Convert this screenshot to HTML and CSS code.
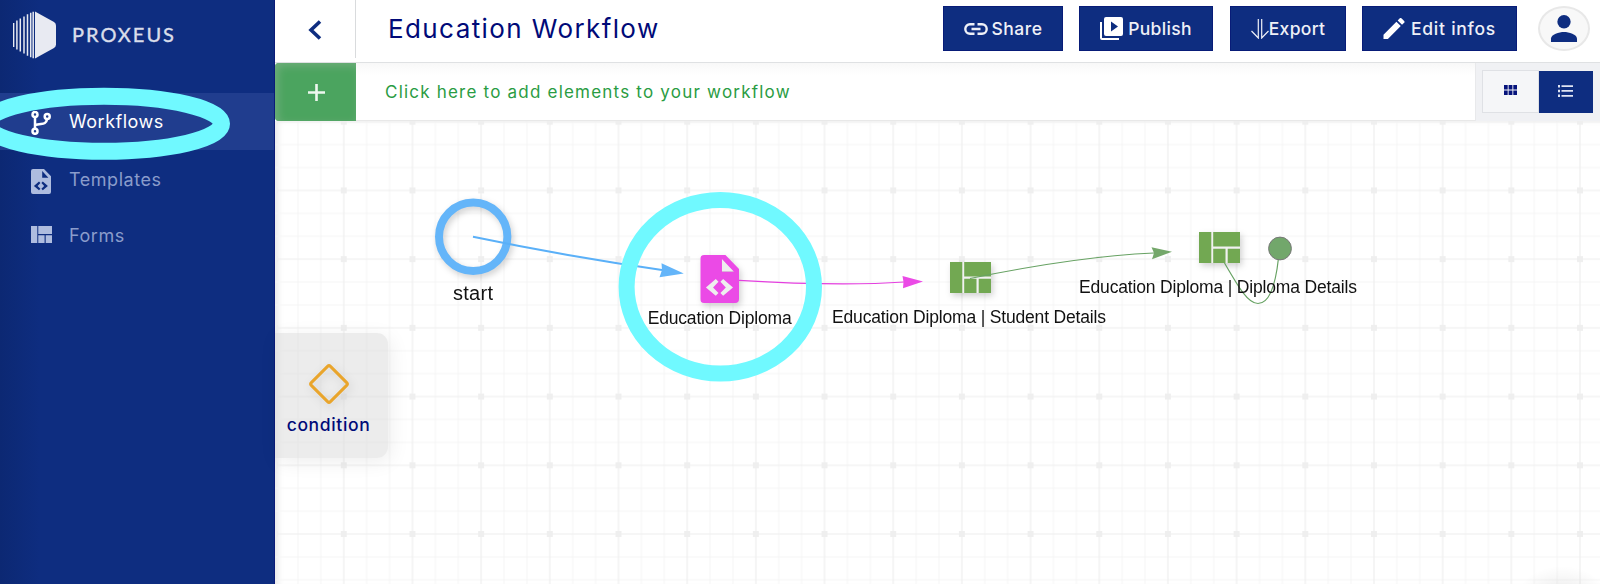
FILE: index.html
```html
<!DOCTYPE html>
<html lang="en">
<head>
<meta charset="utf-8">
<title>Education Workflow</title>
<link rel="stylesheet" href="styles.css">
</head>
<body>
<svg class="defs" aria-hidden="true">
  <symbol id="doc" viewBox="0 0 20 24" preserveAspectRatio="none"><path fill-rule="evenodd" d="M2 0h11l7 7v15a2 2 0 0 1-2 2H2a2 2 0 0 1-2-2V2a2 2 0 0 1 2-2zm9.200 2v6.400h6.200zM8 12l1.400 1.400-2.800 2.800 2.800 2.800L8 20.400l-5.100-4.200zm3.800 0 5.100 4.200-5.100 4.200-1.400-1.400 2.800-2.800-2.800-2.800z"/></symbol>
  <symbol id="form" viewBox="0 0 41 31" preserveAspectRatio="none"><path d="M0 0h12.300v31H0zM14.200 0H41v14.500H14.200zM14.200 16.700h12.300V31H14.200zM28.700 16.700H41V31H28.700z"/></symbol>
</svg>
<div class="app">
  <aside class="sidebar">
    <div class="brand">
      <svg class="brand-mark" viewBox="0 0 43 48">
        <path d="M22 .6 41 11q2 1.300 2 3.500v19q0 2.200-2 3.500L22 47.400z"/>
        <path d="M.6 12v24M3.900 9.500v29M7.300 7.500v33M11 5.500v37M14.500 3.300v41.400M17.700 1.700v44.600M20.200.7v46.600" fill="none" stroke="#e8eaf2" stroke-width="1.500"/>
      </svg>
      <span class="brand-name">PROXEUS</span>
    </div>
    <nav class="menu">
      <a class="item active">
        <svg class="icon-flow" viewBox="0 0 20 24"><g fill="none" stroke="currentColor" stroke-width="2.500"><circle cx="4" cy="3.500" r="2.500"/><circle cx="4" cy="20.300" r="2.500"/><circle cx="16.200" cy="5.500" r="2.500"/><path d="M4 6v12M4 14.200c6-2.500 11 .5 12-6"/></g></svg>
        <span>Workflows</span>
      </a>
      <a class="item templates"><svg class="icon-doc"><use href="#doc"/></svg><span>Templates</span></a>
      <a class="item forms"><svg class="icon-form"><use href="#form"/></svg><span>Forms</span></a>
    </nav>
    <svg class="mark" viewBox="0 0 274 80"><ellipse cx="104" cy="39.800" rx="117.500" ry="27.500"/></svg>
  </aside>
  <main class="main">
    <header class="header">
      <div class="back"><svg viewBox="0 0 14 20"><path d="M12 1.500 3 10l9 8.500"/></svg></div>
      <h1 class="title">Education Workflow</h1>
      <div class="actions">
        <button class="btn share"><svg class="icon-link" viewBox="0 0 24 12"><g fill="none" stroke="currentColor" stroke-width="2.400"><path d="M10.500 1.300H6a4.700 4.700 0 0 0 0 9.400h4.500M13.500 1.300H18a4.700 4.700 0 0 1 0 9.400h-4.500M7.500 6h9"/></g></svg><span>Share</span></button>
        <button class="btn publish"><svg class="icon-publish" viewBox="0 0 23 23"><path d="M0 5h2v16h17v2H2a2 2 0 0 1-2-2z"/><path fill-rule="evenodd" d="M6 0h15a2 2 0 0 1 2 2v15a2 2 0 0 1-2 2H6a2 2 0 0 1-2-2V2a2 2 0 0 1 2-2zm5 4.500v10l7-5z"/></svg><span>Publish</span></button>
        <button class="btn export"><svg class="icon-down" viewBox="0 0 18 20"><path d="M7.300 0v19L.5 12M10.700 0v19l6.800-7" fill="none" stroke="currentColor" stroke-width="1.200"/></svg><span>Export</span></button>
        <button class="btn edit"><svg class="icon-pen" viewBox="3 3 18 18"><path d="M3 17.250V21h3.750L17.810 9.940l-3.750-3.750zM20.710 7.040a1 1 0 0 0 0-1.410l-2.340-2.340a1 1 0 0 0-1.410 0l-1.830 1.830 3.750 3.750z"/></svg><span>Edit infos</span></button>
      </div>
      <div class="avatar"><svg viewBox="0 0 28 28"><circle cx="14" cy="7" r="6.900"/><path d="M.5 28v-3.500C.5 20 9 17.500 14 17.500S27.500 20 27.500 24.500V28z"/></svg></div>
    </header>
    <div class="toolbar">
      <button class="add"><svg viewBox="0 0 17 17"><path d="M8.500 0v17M0 8.500h17"/></svg></button>
      <div class="hint">Click here to add elements to your workflow</div>
      <div class="views">
        <button class="view"><svg class="icon-grid" viewBox="0 0 13 10"><path d="M0 0h3.700v4.500H0zM4.600 0h3.800v4.500H4.600zM9.300 0H13v4.500H9.300zM0 5.500h3.700V10H0zM4.600 5.500h3.800V10H4.600zM9.300 5.500H13V10H9.300z"/></svg></button>
        <button class="view on"><svg class="icon-list" viewBox="0 0 15 12"><path d="M0 0h2v2.400H0zM3.500.2H15v1.800H3.500zM0 4.800h2v2.400H0zM3.500 5H15v1.800H3.500zM0 9.600h2V12H0zM3.500 9.900H15v1.800H3.500z"/></svg></button>
      </div>
    </div>
    <section class="board">
      <svg class="canvas" viewBox="275 121 1325 463">
        <defs>
          <pattern id="grid" x="275.100" y="121.700" width="68.680" height="68.720" patternUnits="userSpaceOnUse">
            <path d="M22.900 0v68.720M45.800 0v68.720M0 22.900h68.680M0 45.800h68.680" stroke="#f5f5f5" stroke-width="1"/>
            <path d="M0 0v68.720M68.680 0v68.720M0 0h68.680M0 68.720h68.680" stroke="#ededed" stroke-width="1.100"/>
            <path d="M0 0h3v3H0zM65.680 0h3v3h-3zM0 65.720h3v3H0zM65.680 65.720h3v3h-3z" fill="#efefef"/>
          </pattern>
          <radialGradient id="glow"><stop offset="0" stop-color="#000" stop-opacity=".08"/><stop offset="1" stop-color="#000" stop-opacity="0"/></radialGradient>
        </defs>
        <rect x="275" y="121" width="1325" height="463" fill="url(#grid)"/>
        <ellipse cx="1562" cy="596" rx="44" ry="30" fill="url(#glow)"/>
        <g class="lift">
          <circle cx="473.200" cy="236.800" r="34.200" fill="none" stroke="#64b5f9" stroke-width="8"/>
          <g fill="#eb4ae6"><path d="M704 277h31v22h-31z" fill="#eee"/><path d="M721 258l13 13h-13z" fill="#eee"/><use href="#doc" x="700.300" y="255" width="38.700" height="48"/></g>
          <g fill="#72a852"><path d="M950 262h41v31h-41z" fill="#f1f1f1"/><use href="#form" x="950" y="262" width="41" height="31"/>
          <path d="M1199 232h41v31h-41z" fill="#f1f1f1"/><use href="#form" x="1199" y="232" width="41" height="31"/></g>
        </g>
        <path d="M473 236.800Q570 257 662 270" fill="none" stroke="#5ab0f8" stroke-width="2"/>
        <path d="M661.500 263.300 683.800 273.600 659.500 277.300 662 270z" fill="#64b5f9"/>
        <path d="M739 280.400Q840 286.500 904 282" fill="none" stroke="#e43fdf" stroke-width="1.200"/>
        <path d="M902.500 276 923 281.500 903 288.300 903.500 282z" fill="#eb4ae6"/>
        <path d="M970 278.500Q1080 256 1154 253" fill="none" stroke="#67a263" stroke-width="1.200"/>
        <path d="M1151.500 247.300 1172 251.700 1152 259.300 1154 253z" fill="#74a76a"/>
        <path d="M1224.500 263C1239 288 1248 303.500 1258 303.500S1275 290 1278.500 258" fill="none" stroke="#67a263" stroke-width="1.200"/>
        <circle cx="1280" cy="248.500" r="11.400" fill="#72a76b" stroke="#777" stroke-width="1"/>
        <g class="labels">
          <text class="start" x="473" y="299.700" textLength="40">start</text>
          <text x="719.700" y="323.700" textLength="144">Education Diploma</text>
          <text x="969" y="323" textLength="274">Education Diploma | Student Details</text>
          <text x="1218" y="293.300" textLength="278">Education Diploma | Diploma Details</text>
        </g>
        <ellipse cx="720.300" cy="286.800" rx="93.700" ry="86.800" fill="none" stroke="#70f9ff" stroke-width="16"/>
      </svg>
      <div class="condition">
        <svg viewBox="0 0 42 42"><rect x="7.500" y="7.500" width="27" height="27" rx="2" transform="rotate(45 21 21)"/></svg>
        <span>condition</span>
      </div>
    </section>
  </main>
</div>
</body>
</html>
```

FILE: styles.css
```css
* { box-sizing: border-box; }
body { margin: 0; overflow: hidden; font-family: Inter, "Open Sans", sans-serif; background: #fff; }
button { border: 0; padding: 0; margin: 0; font: inherit; }
svg { display: block; flex: none; }
.defs { position: absolute; width: 0; height: 0; }
.app { display: flex; width: 1600px; height: 584px; }
.sidebar { position: relative; flex: 0 0 275px; overflow: hidden; background: linear-gradient(90deg, #0c2873, #0e2d80 40px); border-right: 1px solid #0b1c78; }
.brand { display: flex; align-items: center; gap: 16px; height: 93px; padding: 0 0 24px 13px; }
.brand-mark { width: 43px; height: 48px; fill: #e8eaf2; }
.brand-name { padding-bottom: 1px; font-family: Lato, sans-serif; font-size: 20px; line-height: 24px; letter-spacing: 2px; color: #dadeea; -webkit-text-stroke: .4px #dadeea; }
.menu { display: flex; flex-direction: column; font-size: 18px; letter-spacing: .55px; color: #8a9ccb; }
.item { display: flex; align-items: center; height: 57px; padding-left: 31px; }
.item.active { padding-top: 2px; color: #fff; background: #203d8e; letter-spacing: .5px; }
.item.active span { padding-bottom: 3px; margin-left: 18px; }
.item svg { fill: #aebcdf; }
.icon-flow { width: 20px; height: 24px; }
.icon-doc { width: 20px; height: 25px; margin-top: 5px; }
.icon-form { width: 21px; height: 17px; }
.templates span { margin-left: 18px; padding-top: 1px; }
.forms span { margin-left: 17px; padding-top: 1px; }
.forms { padding-bottom: 2px; }
.mark { position: absolute; left: 0; top: 84px; width: 274px; height: 80px; fill: none; stroke: #70f9ff; stroke-width: 17; }
.main { display: flex; flex: 1; flex-direction: column; min-width: 0; }
.header { display: flex; height: 63px; border-bottom: 1px solid #dfe1e3; }
.back { display: flex; width: 81px; height: 58px; padding: 20px 0 0 33px; border-right: 1px solid #d9dbdd; }
.back svg { width: 14px; height: 20px; fill: none; stroke: #0e2d80; stroke-width: 3.600; }
.title { flex: 1; margin: 0; padding: 12px 0 0 32px; font-size: 26px; font-weight: 400; line-height: 34px; letter-spacing: 1.400px; color: #000a78; white-space: nowrap; }
.actions { display: flex; gap: 16px; padding-top: 6px; }
.btn { display: flex; align-items: center; justify-content: center; height: 45px; color: #eef0f7; fill: #fff; background: #0e2d80; border: 1px solid #081c78; font-size: 17.500px; font-weight: 500; letter-spacing: .5px; white-space: nowrap; }
.btn span { padding-bottom: 1px; }
.share { width: 120px; gap: 4px; }
.publish { width: 134px; gap: 5px; letter-spacing: .3px; }
.export { width: 116px; margin-left: 1px; gap: 0; letter-spacing: .3px; }
.edit { width: 155px; gap: 6px; letter-spacing: .75px; }
.icon-link { width: 24px; height: 12px; }
.icon-publish { width: 23px; height: 23px; }
.icon-down { width: 18px; height: 20px; }
.icon-pen { width: 22px; height: 21px; }
.avatar { width: 52px; height: 45px; margin: 6px 10px 0 21px; padding: 7px 0 0 10px; border: 2px solid #e8e8e8; border-radius: 50%; background: #f8f8f8; }
.avatar svg { width: 28px; height: 27px; fill: #0e2d80; }
.toolbar { display: flex; height: 58px; background: linear-gradient(#f8f8f8, #fff 12px); }
.add { display: flex; align-items: center; justify-content: center; width: 81px; height: 58px; border-radius: 4px 0 0 4px; background: #4ba45f; box-shadow: inset 3px 3px 8px #70ae7c; }
.add svg { width: 17px; height: 17px; margin-left: 1px; fill: none; stroke: #eef7ef; stroke-width: 2.600; }
.hint { flex: 1; padding: 17px 0 0 29px; font-size: 17px; line-height: 24px; letter-spacing: 1.210px; color: #2a9c43; white-space: nowrap; border-bottom: 1px solid #e8e8e8; }
.views { display: flex; width: 125px; height: 58px; padding: 7px 7px 8px 6px; background: #f0f1f4; border-left: 1px solid #e8e9eb; }
.view { display: flex; align-items: center; justify-content: center; width: 57px; height: 43px; padding-bottom: 3px; padding-left: 1px; background: #f5f6f8; border: 1px solid #dfe1e5; fill: #06147c; }
.view.on { width: 55px; height: 42px; margin-top: 1px; padding-bottom: 2px; padding-left: 0; background: #0e2d80; border: 0; fill: #dfe4f2; }
.icon-grid { width: 13px; height: 10px; }
.icon-list { width: 15px; height: 12px; }
.board { position: relative; flex: 1; box-shadow: inset 6px 2px 6px -3px #e8e8e8; }
.canvas { width: 1325px; height: 463px; }
.lift { filter: drop-shadow(2px 3px 3px rgba(0, 0, 0, .18)); }
.labels { font-family: "Liberation Sans", Arial, sans-serif; font-size: 17.500px; fill: #111; text-anchor: middle; }
.start { font-size: 20px; }
.condition { position: absolute; left: 0; top: 212px; display: flex; flex-direction: column; align-items: center; width: 113px; height: 125px; padding: 30px 6px 0 0; border-radius: 0 11px 11px 0; background: rgba(215, 215, 215, .48); box-shadow: 3px 4px 20px rgba(0, 0, 0, .07); font-size: 17.500px; font-weight: 500; line-height: 24px; letter-spacing: .65px; color: #000a78; }
.condition svg { width: 42px; height: 42px; margin-bottom: 8px; fill: none; stroke: #e9a52c; stroke-width: 3; filter: drop-shadow(2px 3px 5px rgba(0, 0, 0, .12)); }
```
